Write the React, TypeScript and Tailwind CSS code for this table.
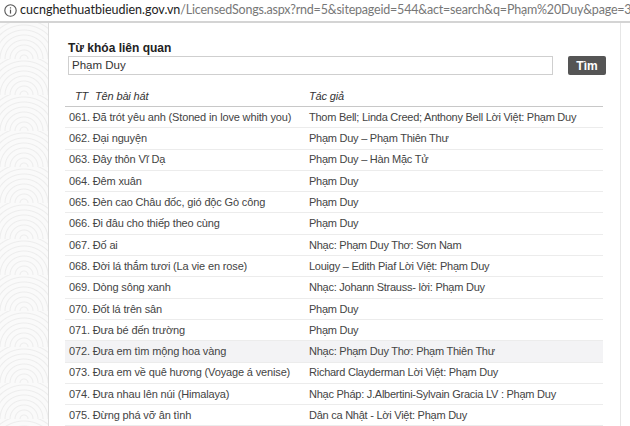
import React from 'react';

const songs: [string, string][] = [
    ['061. Đã trót yêu anh (Stoned in love whith you)', 'Thom Bell; Linda Creed; Anthony Bell Lời Việt: Phạm Duy'],
    ['062. Đại nguyện', 'Phạm Duy – Phạm Thiên Thư'],
    ['063. Đây thôn Vĩ Dạ', 'Phạm Duy – Hàn Mặc Tử'],
    ['064. Đêm xuân', 'Phạm Duy'],
    ['065. Đèn cao Châu đốc, gió độc Gò công', 'Phạm Duy'],
    ['066. Đi đâu cho thiếp theo cùng', 'Phạm Duy'],
    ['067. Đố ai', 'Nhạc: Phạm Duy Thơ: Sơn Nam'],
    ['068. Đời lá thắm tươi (La vie en rose)', 'Louigy – Edith Piaf Lời Việt: Phạm Duy'],
    ['069. Dòng sông xanh', 'Nhạc: Johann Strauss- lời: Phạm Duy'],
    ['070. Đốt lá trên sân', 'Phạm Duy'],
    ['071. Đưa bé đến trường', 'Phạm Duy'],
    ['072. Đưa em tìm mộng hoa vàng', 'Nhạc: Phạm Duy Thơ: Phạm Thiên Thư'],
    ['073. Đưa em về quê hương (Voyage á venise)', 'Richard Clayderman Lời Việt: Phạm Duy'],
    ['074. Đưa nhau lên núi (Himalaya)', 'Nhạc Pháp: J.Albertini-Sylvain Gracia LV : Phạm Duy'],
    ['075. Đừng phá vỡ ân tình', 'Dân ca Nhật - Lời Việt: Phạm Duy'],
];

const App = () => {
    return (
        <div className="w-[630px] h-[426px] overflow-hidden bg-white flex flex-col font-['Liberation_Sans',Arial,sans-serif]">
            {/* address bar */}
            <div className="h-[23px] shrink-0 flex items-center pl-[4px] border-b-2 border-[#d4d4d4] whitespace-nowrap overflow-hidden">
                <svg width="13" height="13" viewBox="0 0 13 13" className="shrink-0">
                    <circle cx="6.5" cy="6.5" r="5.7" fill="none" stroke="#555" strokeWidth="1.1" />
                    <rect x="5.9" y="5.6" width="1.2" height="4" fill="#555" />
                    <rect x="5.9" y="3.3" width="1.2" height="1.2" fill="#555" />
                </svg>
                <span className="ml-[3px] text-[12.5px] leading-none font-['Lato',sans-serif]">
                    <span className="text-[#222]">cucnghethuatbieudien.gov.vn</span>
                    <span className="text-[#777] tracking-[-0.2px]">/LicensedSongs.aspx?rnd=5&amp;sitepageid=544&amp;act=search&amp;q=Phạm%20Duy&amp;page=3</span>
                </span>
            </div>

            <div className="flex flex-1 min-h-0">
                <div className="w-[49px] shrink-0 border-r border-[#dcdcdc] bg-[#f9f9f9] bg-[repeating-radial-gradient(circle_at_50%_100%,#fafafa_0px,#fafafa_3px,#ededed_4px,#fafafa_5px)] bg-size-[48px_36px]" />

                <div className="w-[572px] shrink-0 border-r border-[#e6e6e6] pl-[16px] pt-[18px]">
                    <div className="pl-[3px] text-[12px] font-bold text-[#222] leading-[14px]">Từ khóa liên quan</div>
                    <div className="flex items-center mt-[1px] pl-[3px]">
                        <div className="w-[485px] h-[19px] border border-[#cfcfcf] flex items-center pl-[3px] text-[11.5px] text-[#333]">
                            Phạm Duy
                        </div>
                        <button className="ml-[15px] w-[38px] h-[19px] bg-[#555] rounded-[2px] text-white text-[12px] font-bold leading-none">
                            Tìm
                        </button>
                    </div>

                    <div className="w-[538px] mt-[12px] text-[11px] tracking-[-0.15px] text-[#444]">
                        <div className="h-[20px] flex items-center italic text-[#333] border-b border-[#c8c8c8]">
                            <div className="w-[30px] pl-[10px]">TT</div>
                            <div className="w-[214px]">Tên bài hát</div>
                            <div>Tác giả</div>
                        </div>
                        {songs.map(([title, author], i) => (
                            <div
                                key={title}
                                className={`h-[21.3px] flex items-center border-b border-[#ececec] ${i === 11 ? 'bg-[#f3f3f5]' : ''}`}
                            >
                                <div className="w-[244px] pl-[4px] whitespace-nowrap">{title}</div>
                                <div className="whitespace-nowrap tracking-[-0.25px]">{author}</div>
                            </div>
                        ))}
                    </div>
                </div>
                <div className="flex-1" />
            </div>
        </div>
    );
};

export default App;
